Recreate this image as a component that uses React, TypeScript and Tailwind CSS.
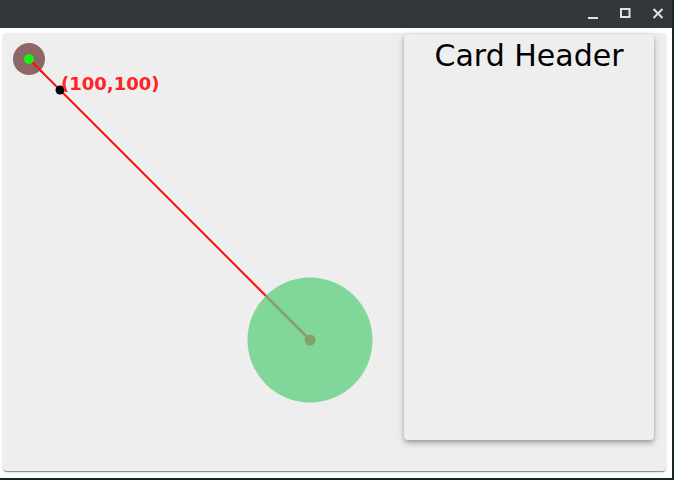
import React from 'react';

const WindowControls: React.FC = () => (
  <div className="flex items-center gap-[20px] pr-[8px]">
    <svg width="12" height="12" viewBox="0 0 12 12">
      <rect x="0" y="9" width="10" height="2" fill="#e2e2e2" />
    </svg>
    <svg width="12" height="12" viewBox="0 0 12 12">
      <rect x="1" y="1" width="8.5" height="8" fill="none" stroke="#e2e2e2" strokeWidth="2" />
    </svg>
    <svg width="12" height="12" viewBox="0 0 12 12">
      <path d="M1.5 1 L10.5 10 M10.5 1 L1.5 10" stroke="#e2e2e2" strokeWidth="2" />
    </svg>
  </div>
);

const Canvas: React.FC = () => {
  // drag handle at (26,26), target marker at (307,307)
  const r = 62.5;
  const edge = 307 - r / Math.SQRT2;
  return (
    <div className="relative flex-1">
      <svg className="absolute inset-0" width="401" height="438">
        <line x1="26" y1="26" x2="307" y2="307" stroke="#ff0f0f" strokeWidth="2" />
        <circle cx="307" cy="307" r={r} fill="#80d799" />
        <line x1={edge} y1={edge} x2="307" y2="307" stroke="#879f68" strokeWidth="2.5" />
        <circle cx="307" cy="307" r="5.5" fill="#879f68" />
        <circle cx="26" cy="26" r="16" fill="#8d6666" />
        <line x1="26" y1="26" x2="40" y2="40" stroke="#ff0f0f" strokeWidth="2" />
        <circle cx="26" cy="26" r="5" fill="#16f016" />
        <circle cx="57" cy="57" r="4.5" fill="#000000" />
        <text
          x="58"
          y="57"
          fill="#ff2323"
          fontSize="18"
          fontWeight="bold"
          fontFamily="'DejaVu Sans', sans-serif"
        >
          (100,100)
        </text>
      </svg>
    </div>
  );
};

export default function App() {
  return (
    <div className="w-[674px] h-[480px] bg-[#13262a] overflow-hidden">
      <div className="w-[672px] h-[478px] bg-white flex flex-col">
        <div className="h-[28px] bg-[#32373b] flex items-center justify-end shrink-0">
          <WindowControls />
        </div>
        <div className="ml-[3px] mt-[5px] w-[663px] h-[438px] bg-[#eeeeee] rounded-[4px] flex shadow-[0px_2px_1px_-1px_rgba(0,0,0,0.3),0px_1px_1px_0px_rgba(0,0,0,0.18),0px_1px_3px_0px_rgba(0,0,0,0.12)]">
          <Canvas />
          <div className="mt-[1px] mr-[12px] w-[250px] h-[406px] bg-[#eeeeee] rounded-[4px] shadow-[0px_2px_4px_-1px_rgba(0,0,0,0.2),0px_4px_5px_0px_rgba(0,0,0,0.14),0px_1px_10px_0px_rgba(0,0,0,0.12)]">
            <div
              className="pt-[4px] text-center text-[30px] leading-[36px] text-black"
              style={{ fontFamily: "'DejaVu Sans', sans-serif" }}
            >
              Card Header
            </div>
          </div>
        </div>
      </div>
    </div>
  );
}
